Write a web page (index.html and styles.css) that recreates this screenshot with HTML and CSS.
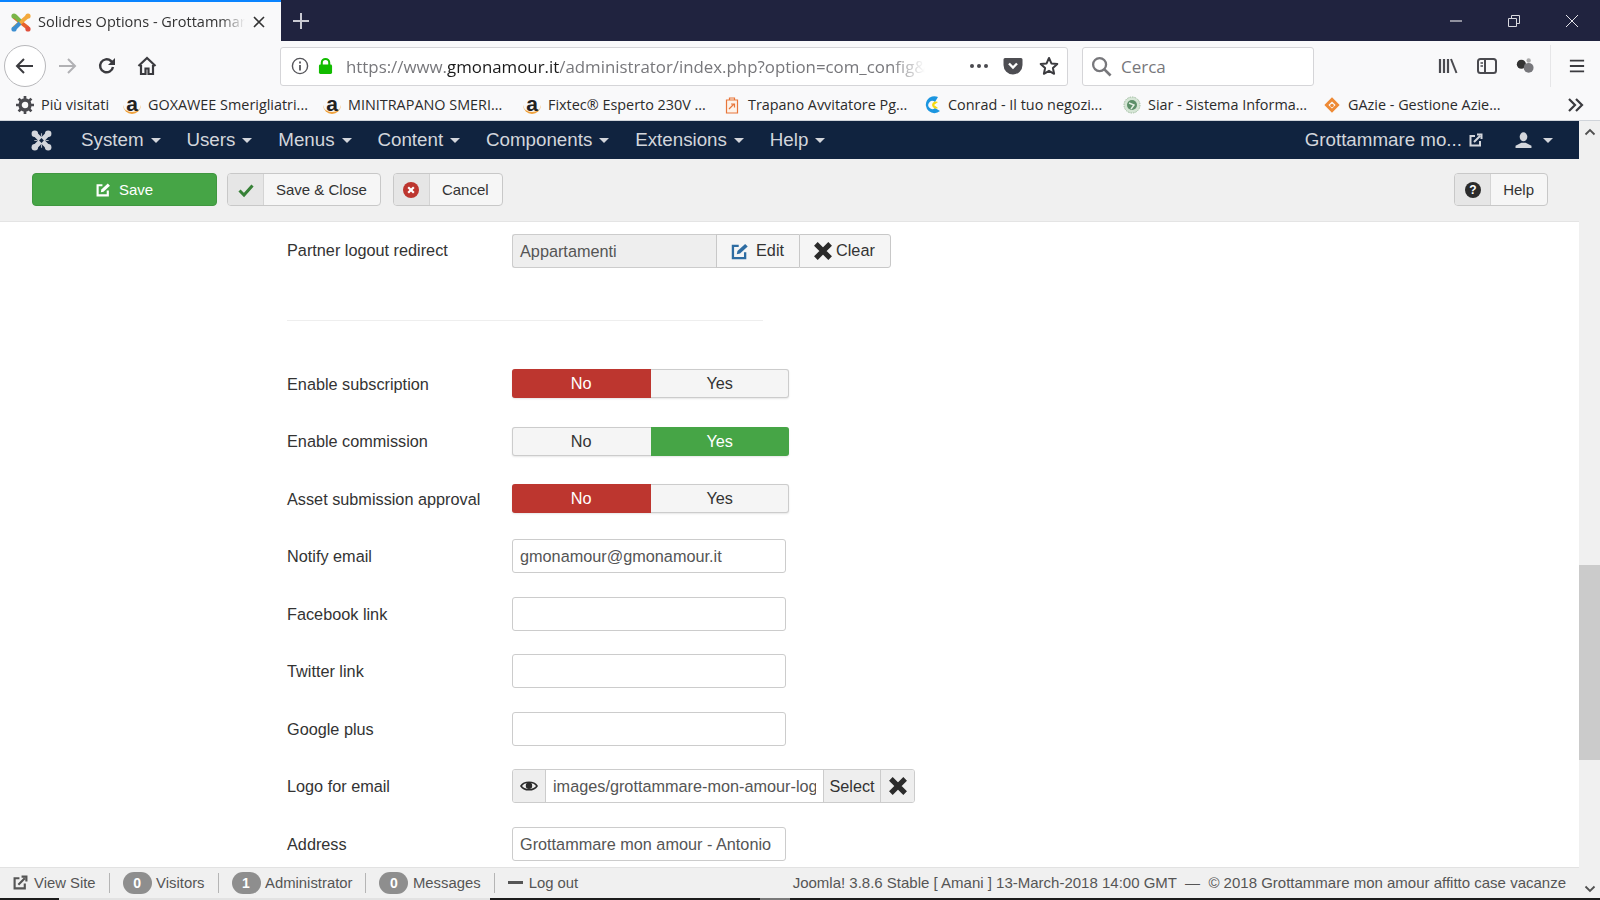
FILE: index.html
```html
<!DOCTYPE html>
<html lang="en">
<head>
    <meta charset="UTF-8">
    <title>Solidres Options - Grottammare mon amour</title>
    <link rel="stylesheet" href="styles.css">
</head>
<body>
    <div class="tabstrip">
        <div class="tab">
            <svg class="favicon" viewBox="0 0 20 20"><path d="M3 5 L17 16" stroke="#e8622c" stroke-width="4"/><path d="M17 4 L3 16" stroke="#f3a93c" stroke-width="4"/><path d="M4 4 L9 9" stroke="#7ab648" stroke-width="4"/><path d="M4 16 L9 11" stroke="#3d8fd1" stroke-width="4"/><circle cx="3" cy="4" r="2.6" fill="#7ab648"/><circle cx="17" cy="4" r="2.6" fill="#f3a93c"/><circle cx="17" cy="17" r="2.6" fill="#e0503c"/><circle cx="3" cy="17" r="2.6" fill="#3d8fd1"/></svg>
            <span class="tab-title">Solidres Options - Grottammare mon amour</span>
            <svg class="tab-close" viewBox="0 0 12 12"><path d="M1 1 L11 11 M11 1 L1 11" stroke="#333" stroke-width="1.6"/></svg>
        </div>
        <svg class="new-tab" viewBox="0 0 18 18"><path d="M9 1 V17 M1 9 H17" stroke="#c9cad2" stroke-width="2"/></svg>
        <div class="window-controls">
            <svg viewBox="0 0 14 14"><path d="M1 7 H13" stroke="#fff" stroke-width="1"/></svg>
            <svg viewBox="0 0 14 14"><path d="M1.5 4.5 H9.5 V12.5 H1.5 Z M4.5 4.5 V1.5 H12.5 V9.5 H9.5" fill="none" stroke="#d8d8de" stroke-width="1"/></svg>
            <svg viewBox="0 0 14 14"><path d="M1 1 L13 13 M13 1 L1 13" stroke="#e4e4ea" stroke-width="1"/></svg>
        </div>
    </div>

    <div class="toolbar">
        <div class="back-btn">
            <svg viewBox="0 0 20 20"><path d="M2 10 H18 M9 3 L2 10 L9 17" fill="none" stroke="#3b3b3f" stroke-width="2"/></svg>
        </div>
        <svg class="tool-icon forward" viewBox="0 0 20 20"><path d="M2 10 H18 M11 3 L18 10 L11 17" fill="none" stroke="#b1b1b4" stroke-width="2"/></svg>
        <svg class="tool-icon reload" viewBox="0 0 20 20"><path d="M16 11 A6.5 6.5 0 1 1 14 5 L16.5 7" fill="none" stroke="#3b3b3f" stroke-width="2.4"/><path d="M18 2 V9 H11 Z" fill="#3b3b3f"/></svg>
        <svg class="tool-icon home" viewBox="0 0 20 20"><path d="M1.5 10 L10 2 L18.5 10" fill="none" stroke="#3b3b3f" stroke-width="2.2"/><path d="M4 9 V18 H8.5 V12.5 H11.5 V18 H16 V9" fill="none" stroke="#3b3b3f" stroke-width="2.2"/></svg>

        <div class="urlbar">
            <svg class="url-info" viewBox="0 0 18 18"><circle cx="9" cy="9" r="7.6" fill="none" stroke="#55555a" stroke-width="1.4"/><path d="M9 8 V13.5 M9 4.5 V6.5" stroke="#55555a" stroke-width="1.8"/></svg>
            <svg class="url-lock" viewBox="0 0 16 18"><path d="M4 8 V5.5 A4 4 0 0 1 12 5.5 V8" fill="none" stroke="#12bc00" stroke-width="2.2"/><rect x="1" y="7.5" width="14" height="10" rx="1.5" fill="#12bc00"/></svg>
            <div class="url-text">https://www.<b>gmonamour.it</b>/administrator/index.php?option=com_config&amp;view=component</div>
            <div class="url-dots"><i></i><i></i><i></i></div>
            <svg class="url-pocket" viewBox="0 0 20 18"><path d="M2 1 H18 A1.5 1.5 0 0 1 19.5 2.5 V8 A9.5 9.5 0 0 1 .5 8 V2.5 A1.5 1.5 0 0 1 2 1 Z" fill="#4d4d52"/><path d="M6 6.5 L10 10.5 L14 6.5" fill="none" stroke="#fff" stroke-width="2.4"/></svg>
            <svg class="url-star" viewBox="0 0 20 20"><path d="M10 2 L12.4 7.4 L18.3 8 L13.9 12 L15.1 17.8 L10 14.8 L4.9 17.8 L6.1 12 L1.7 8 L7.6 7.4 Z" fill="none" stroke="#3b3b3f" stroke-width="2" stroke-linejoin="round"/></svg>
        </div>

        <div class="searchbar">
            <svg viewBox="0 0 22 22"><circle cx="9" cy="9" r="6.8" fill="none" stroke="#77777b" stroke-width="2.4"/><path d="M14 14 L20.5 20.5" stroke="#77777b" stroke-width="2.8"/></svg>
            <span>Cerca</span>
        </div>

        <div class="tool-right">
            <svg class="tr-library" viewBox="0 0 20 18"><path d="M2 2 V16 M6 2 V16 M10 2 V16" stroke="#4a4a4f" stroke-width="2.2"/><path d="M13 2 L18.5 16" stroke="#4a4a4f" stroke-width="2"/></svg>
            <svg class="tr-sidebar" viewBox="0 0 20 18"><rect x="1" y="2" width="18" height="14" rx="2.5" fill="none" stroke="#4a4a4f" stroke-width="2"/><path d="M8 2 V16" stroke="#4a4a4f" stroke-width="2"/><path d="M3.5 6 H6 M3.5 9 H6" stroke="#4a4a4f" stroke-width="1.4"/></svg>
            <svg class="tr-ext" viewBox="0 0 22 18"><circle cx="7" cy="7" r="5" fill="#333"/><circle cx="15" cy="11" r="5.4" fill="#77777b"/><circle cx="15" cy="3" r="2.4" fill="#aaa"/></svg>
            <span class="tool-sep"></span>
            <svg class="tr-menu" viewBox="0 0 18 18"><path d="M1 3 H17 M1 9 H17 M1 15 H17" stroke="#3b3b3f" stroke-width="2"/></svg>
        </div>
    </div>

    <div class="bookmarks">
        <div class="bm bm-first">
            <svg viewBox="0 0 16 16"><circle cx="8" cy="8" r="4.4" fill="none" stroke="#4a4a4f" stroke-width="3"/><path d="M8 0 V3 M8 13 V16 M0 8 H3 M13 8 H16 M2.3 2.3 L4.4 4.4 M11.6 11.6 L13.7 13.7 M13.7 2.3 L11.6 4.4 M4.4 11.6 L2.3 13.7" stroke="#4a4a4f" stroke-width="2.4"/></svg>
            Più visitati
        </div>
        <div class="bm"><span class="amz">a</span>GOXAWEE Smerigliatri...</div>
        <div class="bm"><span class="amz">a</span>MINITRAPANO SMERI...</div>
        <div class="bm"><span class="amz">a</span>Fixtec® Esperto 230V ...</div>
        <div class="bm">
            <svg viewBox="0 0 16 18"><path d="M2.5 4 H13.5 V17 H2.5 Z M5.5 4 V2 H10.5 V4" fill="#fdf3ea" stroke="#e8763a" stroke-width="1.2"/><path d="M5 13 L10 8 M7 8 H10.5 V11.5" fill="none" stroke="#e8763a" stroke-width="1.2"/></svg>
            Trapano Avvitatore Pg...
        </div>
        <div class="bm">
            <svg viewBox="0 0 18 18"><path d="M15 1 A8.5 8.5 0 1 0 17 15 L12 12 A4 4 0 1 1 12 6 Z" fill="#1c96e0"/><path d="M15 6 A4 4 0 0 0 9 9 A4 4 0 0 0 15 12 L11 9 Z" fill="#f6d90f"/></svg>
            Conrad - Il tuo negozi...
        </div>
        <div class="bm">
            <svg viewBox="0 0 18 18"><circle cx="9" cy="9" r="8" fill="#d5e5d5" stroke="#9dbb9d" stroke-dasharray="1.5 1"/><circle cx="9" cy="9" r="5" fill="#5c8f68"/><path d="M6 7 L11 9 L8 13" fill="none" stroke="#e4efe4" stroke-width="1.4"/></svg>
            Siar - Sistema Informa...
        </div>
        <div class="bm">
            <svg viewBox="0 0 20 20"><path d="M10 1.5 L18.5 10 L10 18.5 L1.5 10 Z M10 6 L6 10 L10 14 L14 10 Z" fill="#ee8a35" fill-rule="evenodd"/><circle cx="10" cy="10.5" r="2" fill="#ee8a35"/></svg>
            GAzie - Gestione Azie...
        </div>
        <svg class="bm-more" viewBox="0 0 18 16"><path d="M2 2 L8 8 L2 14 M9 2 L15 8 L9 14" fill="none" stroke="#3b3b3f" stroke-width="2.2"/></svg>
    </div>

    <div class="viewport">
        <div class="admin">
            <nav class="navbar">
                <svg class="joomla" viewBox="0 0 22 22"><path d="M4.5 4.5 L17.5 17.5 M17.5 4.5 L4.5 17.5" stroke="#d3d6dc" stroke-width="5"/><path d="M8.5 11 L11 8.5 L13.5 11 L11 13.5 Z" fill="#10233f"/><path d="M11 3.5 V7 M11 15 V18.5 M3.5 11 H7 M15 11 H18.5" stroke="#aab0ba" stroke-width="1.2"/><circle cx="4" cy="4" r="3.4" fill="#d3d6dc"/><circle cx="18" cy="4" r="3.4" fill="#d3d6dc"/><circle cx="4" cy="18" r="3.4" fill="#d3d6dc"/><circle cx="18" cy="18" r="3.4" fill="#d3d6dc"/></svg>
                <a class="menu">System<i class="caret"></i></a>
                <a class="menu">Users<i class="caret"></i></a>
                <a class="menu">Menus<i class="caret"></i></a>
                <a class="menu">Content<i class="caret"></i></a>
                <a class="menu">Components<i class="caret"></i></a>
                <a class="menu">Extensions<i class="caret"></i></a>
                <a class="menu">Help<i class="caret"></i></a>
                <div class="nav-right">
                    <span class="site-name">Grottammare mo...</span>
                    <svg class="ext-icon" viewBox="0 0 14 14"><path d="M11 8 V12.5 H1.5 V3 H6" fill="none" stroke="#d3d6dc" stroke-width="2"/><path d="M5 9 L11 3 M8 1.5 H12.5 V6" fill="none" stroke="#d3d6dc" stroke-width="2"/></svg>
                    <svg class="user-icon" viewBox="0 0 16 16"><ellipse cx="8" cy="4.5" rx="3.6" ry="4.2" fill="#d3d6dc"/><path d="M.5 15 V13 L6 10 H10 L15.5 13 V15 Z" fill="#d3d6dc"/></svg>
                    <i class="caret"></i>
                </div>
            </nav>

            <div class="subhead">
                <button class="btn-save">
                    <svg viewBox="0 0 14 14"><path d="M11 8 V12.5 H1.5 V3 H6" fill="none" stroke="#fff" stroke-width="2"/><path d="M4.5 9.5 L5 7 L11 1.5 L13 3.5 L7 9 Z" fill="#fff"/></svg>
                    Save
                </button>
                <button class="btn-tool">
                    <span class="btn-ico"><svg viewBox="0 0 16 14"><path d="M1.5 7.5 L6 12 L14.5 2.5" fill="none" stroke="#378137" stroke-width="3"/></svg></span>
                    <span class="btn-label">Save &amp; Close</span>
                </button>
                <button class="btn-tool">
                    <span class="btn-ico"><svg viewBox="0 0 16 16"><circle cx="8" cy="8" r="8" fill="#bd362f"/><path d="M5.2 5.2 L10.8 10.8 M10.8 5.2 L5.2 10.8" stroke="#fff" stroke-width="2.2"/></svg></span>
                    <span class="btn-label">Cancel</span>
                </button>
                <button class="btn-tool btn-help">
                    <span class="btn-ico"><svg viewBox="0 0 16 16"><circle cx="8" cy="8" r="8" fill="#2b2b2b"/><text x="8" y="12" text-anchor="middle" class="help-q">?</text></svg></span>
                    <span class="btn-label">Help</span>
                </button>
            </div>

            <main class="content">
                <div class="row">
                    <label>Partner logout redirect</label>
                    <div class="modal-field">
                        <div class="readonly">Appartamenti</div>
                        <div class="add-btn edit-btn">
                            <svg viewBox="0 0 14 14"><path d="M11 8 V12.5 H1.5 V3 H6" fill="none" stroke="#2d6ca2" stroke-width="1.8"/><path d="M4.5 9.5 L5 7 L11 1.5 L13 3.5 L7 9 Z" fill="#2d6ca2"/></svg>
                            Edit
                        </div>
                        <div class="add-btn clear-btn">
                            <svg viewBox="0 0 14 14"><path d="M2 2 L12 12 M12 2 L2 12" stroke="#2b2b2b" stroke-width="3.6"/></svg>
                            Clear
                        </div>
                    </div>
                </div>

                <hr class="divider">

                <div class="row">
                    <label>Enable subscription</label>
                    <div class="toggle">
                        <span class="on-no">No</span><span>Yes</span>
                    </div>
                </div>
                <div class="row">
                    <label>Enable commission</label>
                    <div class="toggle">
                        <span>No</span><span class="on-yes">Yes</span>
                    </div>
                </div>
                <div class="row">
                    <label>Asset submission approval</label>
                    <div class="toggle">
                        <span class="on-no">No</span><span>Yes</span>
                    </div>
                </div>
                <div class="row">
                    <label>Notify email</label>
                    <div class="input">gmonamour@gmonamour.it</div>
                </div>
                <div class="row">
                    <label>Facebook link</label>
                    <div class="input"></div>
                </div>
                <div class="row">
                    <label>Twitter link</label>
                    <div class="input"></div>
                </div>
                <div class="row">
                    <label>Google plus</label>
                    <div class="input"></div>
                </div>
                <div class="row">
                    <label>Logo for email</label>
                    <div class="media-field">
                        <span class="media-eye"><svg viewBox="0 0 18 12"><path d="M1 6 C4 1 14 1 17 6 C14 11 4 11 1 6 Z" fill="none" stroke="#2b2b2b" stroke-width="1.6"/><circle cx="9" cy="5.8" r="3.2" fill="#2b2b2b"/></svg></span>
                        <span class="media-path"><span>images/grottammare-mon-amour-logo.png</span></span>
                        <span class="media-select">Select</span>
                        <span class="media-clear"><svg viewBox="0 0 14 14"><path d="M2 2 L12 12 M12 2 L2 12" stroke="#2b2b2b" stroke-width="3.6"/></svg></span>
                    </div>
                </div>
                <div class="row">
                    <label>Address</label>
                    <div class="input">Grottammare mon amour - Antonio</div>
                </div>
            </main>

            <footer class="status">
                <span class="st-item">
                    <svg class="st-ext" viewBox="0 0 14 14"><path d="M11 8 V12.5 H1.5 V3 H6" fill="none" stroke="#555" stroke-width="2"/><path d="M5 9 L11 3 M8 1.5 H12.5 V6" fill="none" stroke="#555" stroke-width="2"/></svg>
                    View Site
                </span>
                <span class="st-item"><b class="badge">0</b>Visitors</span>
                <span class="st-item"><b class="badge">1</b>Administrator</span>
                <span class="st-item"><b class="badge">0</b>Messages</span>
                <span class="st-item st-last"><i class="minus"></i>Log out</span>
                <span class="copyright">Joomla! 3.8.6 Stable [ Amani ] 13-March-2018 14:00 GMT &nbsp;— &nbsp;© 2018 Grottammare mon amour affitto case vacanze</span>
            </footer>
        </div>

        <div class="scrollbar">
            <svg viewBox="0 0 12 8"><path d="M1.5 6.5 L6 2 L10.5 6.5" fill="none" stroke="#505050" stroke-width="1.8"/></svg>
            <div class="track"><div class="thumb"></div></div>
            <svg viewBox="0 0 12 8"><path d="M1.5 1.5 L6 6 L10.5 1.5" fill="none" stroke="#505050" stroke-width="1.8"/></svg>
        </div>
    </div>

    <div class="taskbar-edge"></div>
</body>
</html>
```

FILE: styles.css
```css
* {
    box-sizing: border-box;
}

html, body {
    height: 100%;
}

body {
    margin: 0;
    width: 1600px;
    height: 900px;
    overflow: hidden;
    display: flex;
    flex-direction: column;
    font-family: "Liberation Sans", Arial, sans-serif;
    background: #fff;
}

svg {
    display: block;
    flex: none;
}

/* browser chrome */
.tabstrip {
    height: 41px;
    flex: none;
    display: flex;
    align-items: center;
    background: #20233f;
}

.tab {
    width: 281px;
    height: 41px;
    padding: 0 16px 0 11px;
    display: flex;
    align-items: center;
    background: #f9f9fa;
    border-top: 2px solid #0a84ff;
}

.favicon {
    width: 20px;
    height: 20px;
}

.tab-title {
    flex: 1;
    margin-left: 7px;
    overflow: hidden;
    white-space: nowrap;
    font-family: "Open Sans", sans-serif;
    font-size: 14.5px;
    color: #333;
    -webkit-mask-image: linear-gradient(90deg, #000 88%, transparent);
    mask-image: linear-gradient(90deg, #000 88%, transparent);
}

.tab-close {
    width: 12px;
    height: 12px;
    margin-left: 8px;
}

.new-tab {
    width: 18px;
    height: 18px;
    margin-left: 11px;
}

.window-controls {
    margin-left: auto;
    display: flex;
    gap: 44px;
    padding-right: 21px;
}

.window-controls svg {
    width: 14px;
    height: 14px;
}

.toolbar {
    height: 50px;
    flex: none;
    display: flex;
    align-items: center;
    padding-left: 4px;
    background: #f9f9fa;
}

.back-btn {
    width: 42px;
    height: 42px;
    border: 1px solid #b8b8bb;
    border-radius: 50%;
    background: #fff;
    display: flex;
    align-items: center;
    justify-content: center;
}

.back-btn svg {
    width: 20px;
    height: 20px;
}

.tool-icon {
    width: 20px;
    height: 20px;
}

.forward {
    margin-left: 11px;
}

.reload {
    margin-left: 20px;
}

.home {
    margin-left: 20px;
}

.urlbar {
    width: 788px;
    height: 39px;
    margin-left: 123px;
    padding: 0 8px 0 10px;
    display: flex;
    align-items: center;
    background: #fff;
    border: 1px solid #d5d5d8;
    border-radius: 3px;
}

.url-info {
    width: 18px;
    height: 18px;
}

.url-lock {
    width: 15px;
    height: 18px;
    margin-left: 9px;
}

.url-text {
    width: 580px;
    margin-left: 13px;
    overflow: hidden;
    white-space: nowrap;
    font-family: "Open Sans", sans-serif;
    font-size: 16.85px;
    color: #77777b;
    -webkit-mask-image: linear-gradient(90deg, #000 94%, transparent);
    mask-image: linear-gradient(90deg, #000 94%, transparent);
}

.url-text b {
    font-weight: 400;
    color: #1a1a1a;
}

.url-dots {
    display: flex;
    gap: 3px;
    margin-left: 45px;
}

.url-dots i {
    width: 4px;
    height: 4px;
    border-radius: 50%;
    background: #4a4a4f;
}

.url-pocket {
    width: 20px;
    height: 18px;
    margin-left: 15px;
}

.url-star {
    width: 20px;
    height: 20px;
    margin-left: 16px;
}

.searchbar {
    width: 232px;
    height: 39px;
    margin-left: 14px;
    padding-left: 8px;
    display: flex;
    align-items: center;
    gap: 9px;
    background: #fff;
    border: 1px solid #d5d5d8;
    border-radius: 3px;
    font-family: "Open Sans", sans-serif;
    font-size: 17px;
    color: #77777b;
}

.searchbar svg {
    width: 21px;
    height: 21px;
}

.tool-right {
    flex: 1;
    display: flex;
    align-items: center;
    padding-left: 124px;
}

.tool-right svg {
    width: 20px;
    height: 18px;
}

.tr-library {
    margin-right: 19px;
}

.tr-sidebar {
    margin-right: 18px;
}

.tr-ext {
    margin-right: 15px;
}

.tool-right .tr-menu {
    width: 16px;
    margin-left: 18px;
}

.tool-sep {
    width: 1px;
    height: 42px;
    background: #e6e6e8;
}

.bookmarks {
    height: 30px;
    flex: none;
    display: flex;
    align-items: center;
    padding: 0 15px 2px 16px;
    background: #f9f9fa;
    border-bottom: 1px solid #d0d4da;
    font-family: "Open Sans", sans-serif;
    font-size: 14.4px;
    color: #2b2b2b;
}

.bm {
    width: 200px;
    flex: none;
    display: flex;
    align-items: center;
    gap: 7px;
    white-space: nowrap;
}

.bm-first {
    width: 107px;
}

.bm svg {
    width: 18px;
    height: 18px;
}

.amz {
    width: 18px;
    font-family: "Liberation Sans", sans-serif;
    font-size: 21px;
    font-weight: 700;
    line-height: 16px;
    text-align: center;
    color: #222;
    border-bottom: 2px solid #f0a23b;
    border-radius: 0 0 9px 9px;
}

.bm-more {
    width: 18px;
    height: 16px;
    margin-left: auto;
}

/* joomla admin */
.viewport {
    flex: 1;
    min-height: 0;
    display: flex;
}

.admin {
    flex: 1;
    min-width: 0;
    display: flex;
    flex-direction: column;
}

.navbar {
    height: 38px;
    flex: none;
    padding-left: 31px;
    display: flex;
    align-items: center;
    background: #10233f;
    color: #d3d6dc;
    font-size: 18.75px;
}

.joomla {
    width: 21px;
    height: 21px;
    margin-right: 29px;
}

.menu {
    display: flex;
    align-items: center;
    margin-right: 25.9px;
    white-space: nowrap;
}

.caret {
    width: 0;
    height: 0;
    margin-left: 7px;
    border-left: 5px solid transparent;
    border-right: 5px solid transparent;
    border-top: 5px solid #d3d6dc;
}

.nav-right {
    margin-left: auto;
    padding-right: 26px;
    display: flex;
    align-items: center;
}

.nav-right .caret {
    margin-left: 11px;
}

.ext-icon {
    width: 14px;
    height: 14px;
    margin-left: 7px;
}

.user-icon {
    width: 17px;
    height: 17px;
    margin-left: 32px;
}

.subhead {
    height: 63px;
    flex: none;
    padding: 14px 31px 0 32px;
    display: flex;
    align-items: flex-start;
    background: #f0f0f0;
    border-bottom: 1px solid #e4e4e4;
}

.subhead button {
    height: 33px;
    padding: 0;
    font-family: inherit;
    font-size: 15px;
    border-radius: 4px;
}

.btn-save {
    width: 185px;
    margin-right: 10px;
    display: flex;
    align-items: center;
    justify-content: center;
    gap: 8px;
    background: #46a546;
    border: 1px solid #409740;
    color: #fff;
}

.btn-save svg {
    width: 15px;
    height: 15px;
}

.btn-tool {
    margin-right: 12px;
    display: flex;
    align-items: stretch;
    background: #f6f6f6;
    border: 1px solid #c8c8c8;
    color: #333;
    overflow: hidden;
}

.btn-ico {
    width: 36px;
    display: flex;
    align-items: center;
    justify-content: center;
    background: #e6e6e6;
    border-right: 1px solid #d4d4d4;
}

.btn-ico svg {
    width: 16px;
    height: 16px;
}

.help-q {
    font-size: 12px;
    font-weight: 700;
    fill: #fff;
    font-family: "Liberation Sans", sans-serif;
}

.btn-label {
    padding: 0 13px 0 12px;
    line-height: 31px;
}

.btn-help {
    margin-left: auto;
    margin-right: 0;
}

.content {
    flex: 1;
    min-height: 0;
    overflow: hidden;
    padding: 0 0 0 287px;
    background: #fff;
    font-size: 16.25px;
    color: #333;
}

.row {
    height: 57.5px;
    display: flex;
    align-items: center;
}

.row label {
    width: 225px;
    flex: none;
}

.divider {
    width: 476px;
    height: 1px;
    margin: 40px 0 35px;
    border: 0;
    background: #eee;
}

.modal-field {
    display: flex;
    height: 34px;
}

.readonly {
    width: 204px;
    padding-left: 7px;
    line-height: 32px;
    background: #eee;
    border: 1px solid #ccc;
    border-right: 0;
    border-radius: 3px 0 0 3px;
    color: #555;
}

.add-btn {
    display: flex;
    align-items: center;
    background: #f5f5f5;
    border: 1px solid #c8c8c8;
}

.edit-btn {
    width: 83px;
    padding-left: 14px;
    gap: 7px;
    border-right: 0;
}

.edit-btn svg {
    width: 18px;
    height: 18px;
}

.clear-btn {
    width: 92px;
    padding-left: 13px;
    gap: 3px;
    border-radius: 0 3px 3px 0;
}

.clear-btn svg {
    width: 20px;
    height: 20px;
}

.toggle {
    width: 277px;
    height: 29px;
    display: flex;
    border-radius: 3px;
    box-shadow: 0 0 0 1px #ccc inset, 0 1px 2px rgba(0, 0, 0, .1);
    background: #f5f5f5;
    overflow: hidden;
    margin-top: -1px;
}

.toggle span {
    flex: 1;
    text-align: center;
    line-height: 28px;
}

.on-no {
    background: #bd362f;
    color: #fff;
}

.on-yes {
    background: #46a546;
    color: #fff;
}

.input {
    width: 274px;
    height: 34px;
    margin-top: -1px;
    padding-left: 7px;
    line-height: 32px;
    white-space: nowrap;
    overflow: hidden;
    background: #fff;
    border: 1px solid #ccc;
    border-radius: 3px;
    color: #555;
}

.media-field {
    display: flex;
    height: 34px;
    margin-top: -2px;
    border: 1px solid #ccc;
    border-radius: 3px;
    overflow: hidden;
}

.media-eye {
    width: 33px;
    display: flex;
    align-items: center;
    justify-content: center;
    background: #eee;
    border-right: 1px solid #ccc;
}

.media-eye svg {
    width: 18px;
    height: 12px;
}

.media-path {
    width: 277px;
    padding: 0 7px;
    overflow: hidden;
    white-space: nowrap;
    line-height: 32px;
    color: #555;
}

.media-path span {
    display: block;
    overflow: hidden;
}

.media-select {
    width: 58px;
    text-align: center;
    line-height: 32px;
    background: #eee;
    border-left: 1px solid #ccc;
    border-right: 1px solid #ccc;
}

.media-clear {
    width: 33px;
    display: flex;
    align-items: center;
    justify-content: center;
    background: #eee;
}

.media-clear svg {
    width: 20px;
    height: 20px;
}

.status {
    height: 31px;
    padding: 0 13px 1px;
    display: flex;
    align-items: center;
    flex: none;
    background: #f0f0f0;
    border-top: 1px solid #e2e2e2;
    font-size: 15px;
    color: #555;
    white-space: nowrap;
}

.st-item {
    display: flex;
    align-items: center;
    height: 20px;
    padding-right: 13px;
    margin-right: 13px;
    border-right: 1px solid #b5b5b5;
    font-size: 14.85px;
}

.st-last {
    border-right: 0;
}

.st-ext {
    width: 15px;
    height: 15px;
    margin-right: 6px;
}

.badge {
    width: 29px;
    height: 22px;
    margin-right: 4.5px;
    border-radius: 11px;
    background: #8e8e8e;
    color: #fff;
    font-size: 14px;
    line-height: 22px;
    text-align: center;
}

.minus {
    width: 15px;
    height: 3px;
    margin-right: 6px;
    background: #555;
}

.copyright {
    margin-left: auto;
}

.scrollbar {
    width: 21px;
    flex: none;
    display: flex;
    flex-direction: column;
    align-items: center;
    background: #f0f0f0;
    padding: 7px 0 5px;
}

.scrollbar svg {
    width: 12px;
    height: 8px;
}

.track {
    flex: 1;
    width: 100%;
    padding-top: 429px;
}

.thumb {
    height: 195px;
    background: #cbcbcb;
}

/* edge of the windows taskbar under the browser */
.taskbar-edge {
    height: 2px;
    flex: none;
    background: linear-gradient(90deg, #1c1c1c 59px, #e2e2e2 59px, #e2e2e2 490px, #1c1c1c 490px, #1c1c1c 760px, #7a7a7a 760px, #7a7a7a 790px, #1c1c1c 790px);
}
```
